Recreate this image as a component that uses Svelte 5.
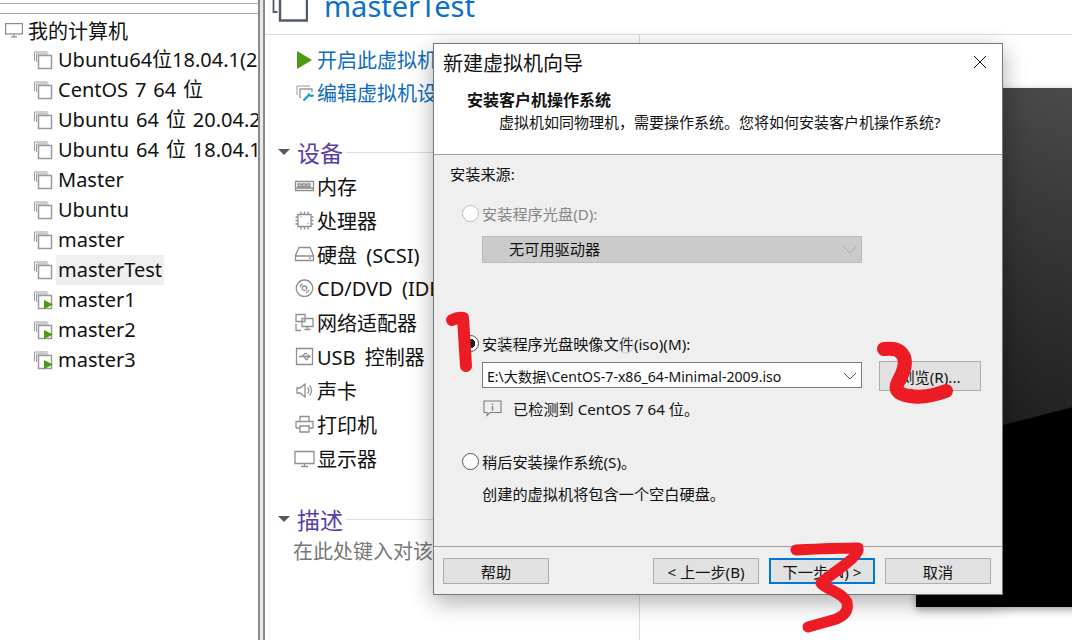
<script lang="ts">
const vms = [
	{ name: "Ubuntu64位18.04.1(2" },
	{ name: "CentOS 7 64 位" },
	{ name: "Ubuntu 64 位 20.04.2" },
	{ name: "Ubuntu 64 位 18.04.1" },
	{ name: "Master" },
	{ name: "Ubuntu" },
	{ name: "master" },
	{ name: "masterTest", selected: true },
	{ name: "master1", running: true },
	{ name: "master2", running: true },
	{ name: "master3", running: true },
];

const devices = [
	{ name: "内存", icon: "M1.5 5.5h18v9h-18zM4 8h3v2.5h-3zM8.5 8h3v2.5h-3zM13 8h3v2.5h-3zM1.5 12h18" },
	{ name: "处理器", icon: "M4 4.5h13v12h-13zM1.5 7h2M1.5 10.5h2M1.5 14h2M17.5 7h2M17.5 10.5h2M17.5 14h2M7 1.5v2.5M10.5 1.5v2.5M14 1.5v2.5M7 17v2.5M10.5 17v2.5M14 17v2.5M6.5 7h1M13.5 13.5h1" },
	{ name: "硬盘 (SCSI)", icon: "M5 3.5h11l3.5 8v5h-18v-5zM1.5 12h18M15 14.2h2" },
	{ name: "CD/DVD (IDE)", icon: "M10.5 2a8.2 8.2 0 1 0 .01 0zM10.5 8a2.3 2.3 0 1 0 .01 0zM6 9a5 5 0 0 1 3-3M15 12a5 5 0 0 1-3 3" },
	{ name: "网络适配器", icon: "M2 2.5h9v7h-9zM8 6.5h11v8h-11zM13.5 14.5v3M10.5 17.5h6M2 12v6.500h5" },
	{ name: "USB 控制器", icon: "M2.500 2.500h16v16h-16zM5 10.500h11M8 10.500l3-3h2M10 10.500l2 3h2M16 10.500l-2-1.500v3z" },
	{ name: "声卡", icon: "M3 8h3l5-4v13l-5-4h-3zM13.500 7.500a4 4 0 0 1 0 6M15.500 5.500a7 7 0 0 1 0 10" },
	{ name: "打印机", icon: "M6 7v-4.500h9v4.500M2 14v-6.500h17v6.500h-4M6 14h-4M6 12h9v6h-9z" },
	{ name: "显示器", icon: "M1 3.500h19v12h-19zM7 18.500h7M10.500 15.500v3" },
];
</script>

{#snippet vmIcon(running: boolean)}
	<svg class="vm-icon" width="20" height="20" viewBox="0 0 20 20" fill="none" stroke="#9b9b9b">
		<path d="M1.500 11v-9h13" stroke-width="1" />
		<path d="M3.500 12v-8h12" stroke-width="1" />
		<rect x="5.500" y="5.500" width="13" height="13" stroke-width="1.500" />
		{#if running}
			<path d="M11 10l9 4.500-9 4.500z" fill="#4f9a0c" stroke="none" />
		{/if}
	</svg>
{/snippet}

<div class="app">
	<aside class="sidebar">
		<div class="tabs"></div>
		<div class="tree">
			<div class="tree-root">
				<svg width="18" height="15" viewBox="0 0 18 15" fill="none" stroke="#8c8c8c" stroke-width="1.200">
					<rect x="0.600" y="0.600" width="16.800" height="10.300" />
					<path d="M6 13.800h6M9 11v2.500" />
				</svg>
				<span>我的计算机</span>
			</div>
			{#each vms as vm}
				<div class="tree-row">
					{@render vmIcon(!!vm.running)}
					<span class="vm-name" class:selected={vm.selected}>{vm.name}</span>
				</div>
			{/each}
		</div>
	</aside>
	<div class="splitter"></div>

	<main class="detail">
		<header class="detail-head">
			<svg width="36" height="24" viewBox="0 0 36 24" fill="none" stroke="#4f5b66">
				<path d="M1.500 0v14h4" stroke-width="1.800" />
				<path d="M8 0v22.500h27v-22.500" stroke-width="2.400" />
			</svg>
			<span class="vm-title">masterTest</span>
		</header>

		<div class="detail-body">
			<div class="left-col">
				<div class="actions">
					<div class="action">
						<svg class="action-icon" width="20" height="18" viewBox="0 0 20 18" preserveAspectRatio="xMinYMid"><path d="M1 0l15 9-15 9z" fill="#4f9a0c" /></svg>
						<span>开启此虚拟机</span>
					</div>
					<div class="action">
						<svg class="action-icon" width="20" height="20" viewBox="0 0 20 20" fill="none">
							<path d="M1 12v-9h13" stroke="#999" />
							<path d="M4 15v-9h12v3" stroke="#999" stroke-width="1.400" />
							<path d="M7.500 17.500l6-6M12.500 10.500a3 3 0 0 0 5 1.500" stroke="#1a9ad6" stroke-width="2.200" />
						</svg>
						<span>编辑虚拟机设置</span>
					</div>
				</div>

				<section class="section">
					<div class="section-head">
						<i class="caret"></i>
						<span class="section-title">设备</span>
						<i class="section-line"></i>
					</div>
					{#each devices as d}
						<div class="device">
							<svg width="21" height="21" viewBox="0 0 21 21" fill="none" stroke="#8f8f8f" stroke-width="1.300">
								<path d={d.icon} />
							</svg>
							<span>{d.name}</span>
						</div>
					{/each}
				</section>

				<section class="section desc">
					<div class="section-head">
						<i class="caret"></i>
						<span class="section-title">描述</span>
						<i class="section-line"></i>
					</div>
					<div class="desc-text">在此处键入对该虚拟机的描述。</div>
				</section>
			</div>

			<div class="right-col">
				<div class="thumb">
					<div class="thumb-gloss"></div>
				</div>
			</div>
		</div>
	</main>

	<div class="dialog">
		<div class="dialog-top">
			<div class="dialog-title">
				<span>新建虚拟机向导</span>
				<svg width="14" height="14" viewBox="0 0 14 14" stroke="#111" stroke-width="1" fill="none">
					<path d="M1 1l12 12M13 1l-12 12" />
				</svg>
			</div>
			<div class="dialog-heading">安装客户机操作系统</div>
			<div class="dialog-sub">虚拟机如同物理机，需要操作系统。您将如何安装客户机操作系统?</div>
		</div>

		<div class="dialog-body">
			<div class="group-label">安装来源:</div>

			<label class="radio-row disabled">
				<i class="radio"></i>
				<span>安装程序光盘(D):</span>
			</label>
			<div class="select disabled-select">
				<span>无可用驱动器</span>
				<svg width="14" height="8" viewBox="0 0 14 8" fill="none" stroke="#aaa"><path d="M1 1l6 6 6-6" /></svg>
			</div>

			<label class="radio-row iso">
				<i class="radio checked"></i>
				<span>安装程序光盘映像文件(iso)(M):</span>
			</label>
			<div class="iso-row">
				<div class="select iso-select">
					<span>E:\大数据\CentOS-7-x86_64-Minimal-2009.iso</span>
					<svg width="14" height="8" viewBox="0 0 14 8" fill="none" stroke="#555"><path d="M1 1l6 6 6-6" /></svg>
				</div>
				<button class="btn browse">浏览(R)...</button>
			</div>
			<div class="detected">
				<svg width="19" height="17" viewBox="0 0 19 17" fill="none" stroke="#7d7d7d" stroke-width="1.100">
					<path d="M1 1h17v11.500h-11l-3 3v-3h-3z" />
					<path d="M9.500 3.500v1.500M9.500 6v4.500" stroke-width="1.400" />
				</svg>
				<span>已检测到 CentOS 7 64 位。</span>
			</div>

			<label class="radio-row later">
				<i class="radio"></i>
				<span>稍后安装操作系统(S)。</span>
			</label>
			<div class="later-note">创建的虚拟机将包含一个空白硬盘。</div>
		</div>

		<div class="dialog-foot">
			<button class="btn">帮助</button>
			<div class="foot-right">
				<button class="btn">&lt; 上一步(B)</button>
				<button class="btn primary">下一步(N) &gt;</button>
				<button class="btn">取消</button>
			</div>
		</div>
	</div>

	<!-- hand drawn annotations on top of the screenshot -->
	<svg class="marks" width="1072" height="640" viewBox="0 0 1072 640" fill="none">
		<circle cx="507" cy="344" r="7" stroke="#c6c8d2" stroke-width="1" />
		<circle cx="626" cy="346" r="7" stroke="#c6c8d2" stroke-width="1" />
		<g stroke="#ed1c24" stroke-linecap="round" stroke-linejoin="round">
			<path d="M452 320q6-3 11-2l3 48" stroke-width="12" />
			<path d="M884 349c10-1 16 0 20 8 3 9-2 18-6 25-3 7-2 12 12 14 12 2 25-1 36-5" stroke-width="14" />
			<path d="M796 550c20-1 45-2 62-2 3 8-26 25-37 35 3 6 20 8 26 19 2 10-4 15-14 18l-25 7" stroke-width="11" />
		</g>
	</svg>
</div>

<style>
	:global(body) {
		margin: 0;
		background: #fff;
	}
	.app {
		position: relative;
		display: flex;
		width: 1072px;
		height: 640px;
		overflow: hidden;
		background: #fff;
		font-family: "Noto Sans", "Noto Sans CJK SC", sans-serif;
		color: #111;
	}

	.sidebar {
		flex: none;
		width: 258px;
		border-right: 2px solid #8a8a8a;
		overflow: hidden;
	}
	.splitter {
		flex: none;
		width: 3px;
		background: #e8e8e8;
	}
	.tabs {
		height: 9px;
		border-top: 1px solid #aaa;
		border-bottom: 1px solid #aaa;
		margin-top: 3px;
	}
	.tree {
		padding-top: 1px;
	}
	.tree-root {
		display: flex;
		align-items: center;
		gap: 5px;
		height: 30px;
		padding-left: 5px;
		font-size: 20px;
		white-space: nowrap;
	}
	.tree-row {
		display: flex;
		align-items: center;
		height: 30px;
		padding-left: 33px;
		font-size: 20px;
		word-spacing: 1.700px;
		white-space: nowrap;
	}
	.vm-icon {
		flex: none;
	}
	.vm-name {
		margin-left: 3px;
		padding: 0 2px;
		line-height: 30px;
	}
	.vm-name.selected {
		background: #efefef;
	}

	.detail {
		flex: 1;
		min-width: 0;
		border-left: 2px solid #8a8a8a;
		display: flex;
		flex-direction: column;
	}
	.detail-head {
		flex: none;
		display: flex;
		align-items: flex-end;
		gap: 16px;
		height: 35px;
		padding-left: 7px;
		border-bottom: 1px solid #ddd;
		box-sizing: border-box;
		overflow: hidden;
	}
	.detail-head svg {
		margin-bottom: 12px;
	}
	.vm-title {
		font-size: 29px;
		line-height: 36px;
		color: #0c70c8;
		margin-bottom: 10px;
	}
	.detail-body {
		flex: 1;
		display: flex;
		min-height: 0;
	}
	.left-col {
		flex: none;
		width: 374px;
		border-right: 1px solid #ddd;
		overflow: hidden;
	}
	.actions {
		padding: 8px 0 0 31px;
	}
	.action {
		display: flex;
		align-items: center;
		height: 33px;
		font-size: 20px;
		color: #0d6cc0;
		white-space: nowrap;
	}
	.action-icon {
		flex: none;
		width: 20px;
		margin-right: 1px;
	}
	.section {
		margin-top: 26px;
	}
	.section-head {
		display: flex;
		align-items: center;
		height: 34px;
		padding-left: 13px;
	}
	.caret {
		width: 0;
		height: 0;
		border-left: 6px solid transparent;
		border-right: 6px solid transparent;
		border-top: 6px solid #4f5b66;
		margin-right: 7px;
	}
	.section-title {
		font-size: 23px;
		color: #5a3da6;
	}
	.section-line {
		flex: 1;
		height: 1px;
		background: #ddd;
		margin-left: 3px;
	}
	.device {
		display: flex;
		align-items: center;
		gap: 2px;
		height: 34px;
		padding-left: 29px;
		font-size: 20px;
		word-spacing: 4px;
		white-space: nowrap;
	}
	.section.desc {
		margin-top: 27px;
	}
	.desc-text {
		padding-left: 28px;
		margin-top: 1px;
		font-size: 20px;
		line-height: 30px;
		color: #777;
		white-space: nowrap;
	}

	.right-col {
		flex: 1;
		min-width: 0;
		padding: 53px 0 0 276px;
		overflow: hidden;
	}
	.thumb {
		position: relative;
		width: 400px;
		height: 519px;
		background: #000;
		box-shadow: 0 3px 8px rgba(0, 0, 0, 0.35);
		overflow: hidden;
	}
	.thumb-gloss {
		position: absolute;
		inset: 0;
		background: linear-gradient(200deg, #565656 0%, #333 40%, #1d1d1d 70%);
		clip-path: polygon(0 0, 100% 0, 100% 45%, 39% 61.500%, 21.500% 65%, 0 69%);
	}

	.dialog {
		position: absolute;
		left: 433px;
		top: 43px;
		width: 570px;
		height: 552px;
		box-sizing: border-box;
		display: flex;
		flex-direction: column;
		background: #efefef;
		border: 1px solid #777;
		box-shadow: 0 7px 22px rgba(0, 0, 0, 0.32);
		font-size: 15.200px;
	}
	.dialog-top {
		flex: none;
		height: 111px;
		box-sizing: border-box;
		background: #fff;
		border-bottom: 1px solid #a0a0a0;
	}
	.dialog-title {
		display: flex;
		align-items: center;
		justify-content: space-between;
		height: 36px;
		padding: 0 15px 0 9px;
		font-size: 20px;
		margin-bottom: 8px;
	}
	.dialog-heading {
		padding-left: 33px;
		font-size: 16px;
		line-height: 24px;
		font-weight: 700;
	}
	.dialog-sub {
		padding-left: 65px;
		font-size: 15px;
		line-height: 21px;
		white-space: nowrap;
	}
	.dialog-body {
		flex: 1;
		padding: 8px 0 0 16px;
		min-height: 0;
	}
	.group-label {
		line-height: 22px;
	}
	.radio-row {
		display: flex;
		align-items: center;
		gap: 3px;
		height: 22px;
		padding-left: 12px;
	}
	.radio-row.disabled {
		margin-top: 17px;
		color: #858585;
	}
	.radio {
		flex: none;
		box-sizing: border-box;
		width: 17px;
		height: 17px;
		border-radius: 50%;
		border: 1.500px solid #555;
		background: #fff;
	}
	.disabled .radio {
		border-color: #bbb;
	}
	.radio.checked {
		background: radial-gradient(circle, #222 0 4.500px, #fff 5px);
	}
	.select {
		display: flex;
		align-items: center;
		justify-content: space-between;
		box-sizing: border-box;
		width: 380px;
		height: 27px;
		margin-left: 32px;
		padding-right: 4px;
		white-space: nowrap;
	}
	.disabled-select {
		margin-top: 12px;
		background: #cbcbcb;
		border: 1px solid #bcbcbc;
		padding-left: 26px;
		padding-bottom: 3px;
	}
	.disabled-select svg {
		margin-top: 3px;
	}
	.radio-row.iso {
		margin-top: 69px;
	}
	.iso-row {
		display: flex;
		align-items: flex-start;
		gap: 17px;
		margin-top: 8px;
	}
	.iso-select {
		height: 26px;
		background: #fff;
		border: 1px solid #7a7a7a;
		padding-left: 4px;
		padding-top: 1px;
		font-size: 14.100px;
	}
	.btn {
		font: inherit;
		color: #111;
		width: 106px;
		height: 26px;
		padding: 0;
		box-sizing: border-box;
		background: #e1e1e1;
		border: 1px solid #adadad;
		border-radius: 0;
		white-space: nowrap;
	}
	.btn.browse {
		width: 102px;
		height: 30px;
		margin-top: -1px;
	}
	.btn.primary {
		border: 2px solid #0078d7;
	}
	.detected {
		display: flex;
		align-items: center;
		gap: 11px;
		margin: 5px 0 0 33px;
		height: 24px;
	}
	.radio-row.later {
		margin-top: 30px;
	}
	.later-note {
		margin: 11px 0 0 32px;
		line-height: 22px;
	}
	.dialog-foot {
		flex: none;
		display: flex;
		align-items: center;
		justify-content: space-between;
		height: 48px;
		box-sizing: border-box;
		padding: 0 11px 0 9px;
		border-top: 1px solid #a0a0a0;
	}
	.foot-right {
		display: flex;
		gap: 10px;
	}

	.marks {
		position: absolute;
		left: 0;
		top: 0;
		pointer-events: none;
	}
</style>
